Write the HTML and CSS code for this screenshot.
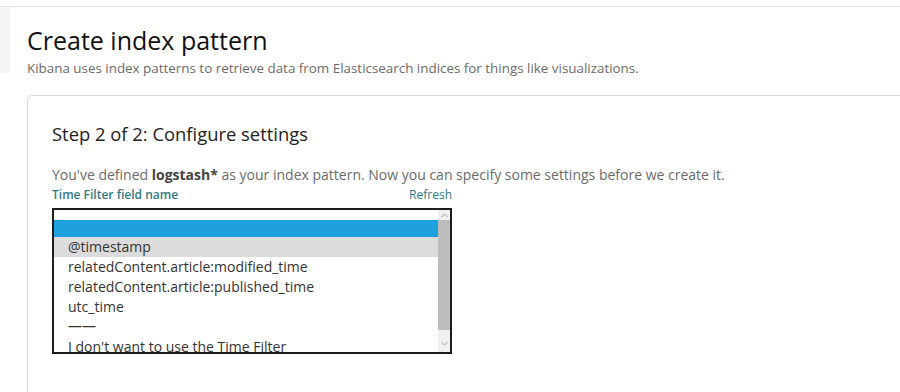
FILE: index.html
```html
<!DOCTYPE html>
<html lang="en">
<head>
    <meta charset="UTF-8">
    <title>Create index pattern</title>
    <link rel="stylesheet" href="styles.css">
</head>
<body>
    <div class="topbar"></div>
    <div class="header">
        <div class="strip"></div>
        <div class="header-text">
            <h1>Create index pattern</h1>
            <p class="subtitle">Kibana uses index patterns to retrieve data from Elasticsearch indices for things like visualizations.</p>
        </div>
    </div>

    <div class="card">
        <h2>Step 2 of 2: Configure settings</h2>
        <p class="intro">You've defined <b>logstash*</b> as your index pattern. Now you can specify some settings before we create it.</p>
        <div class="field">
            <div class="label-row">
                <span class="label">Time Filter field name</span>
                <span class="refresh">Refresh</span>
            </div>
            <div class="listbox">
                <div class="options">
                    <div class="option selected"></div>
                    <div class="option hover">@timestamp</div>
                    <div class="option">relatedContent.article:modified_time</div>
                    <div class="option">relatedContent.article:published_time</div>
                    <div class="option">utc_time</div>
                    <div class="option sep">——</div>
                    <div class="option">I don't want to use the Time Filter</div>
                </div>
                <div class="scrollbar">
                    <div class="arrow">
                        <svg width="7" height="5" viewBox="0 0 7 5"><path d="M0.5 4 L3.5 1 L6.5 4" fill="none" stroke="#a0a0a0" stroke-width="1"/></svg>
                    </div>
                    <div class="thumb"></div>
                    <div class="arrow">
                        <svg width="7" height="5" viewBox="0 0 7 5"><path d="M0.5 1 L3.5 4 L6.5 1" fill="none" stroke="#a0a0a0" stroke-width="1"/></svg>
                    </div>
                </div>
            </div>
        </div>
    </div>
</body>
</html>
```

FILE: styles.css
```css
body {
    margin: 0;
    background-color: #fff;
    font-family: "Open Sans", "Noto Sans", sans-serif;
    overflow: hidden;
}

.topbar {
    height: 6px;
    border-bottom: 1px solid #e4e4e4;
}

.header {
    display: flex;
}

.strip {
    width: 10px;
    height: 66px;
    background-color: #f4f4f4;
}

.header-text {
    padding-left: 17px;
}

h1 {
    margin: 18px 0 0;
    font-size: 25px;
    line-height: 30px;
    font-weight: 400;
    color: #111;
}

.subtitle {
    margin: 3px 0 0;
    font-size: 13.4px;
    line-height: 20px;
    color: #6b6b6b;
}

.card {
    margin: 17px 0 0 27px;
    width: 900px;
    height: 400px;
    border: 1px solid #dcdcdc;
    border-radius: 5px;
    padding: 24px 24px;
}

h2 {
    margin: 1px 0 0;
    font-size: 18.4px;
    line-height: 26px;
    font-weight: 400;
    color: #222;
}

.intro {
    margin: 19px 0 0;
    font-size: 14px;
    line-height: 18px;
    color: #6b6b6b;
}

.intro b {
    color: #444;
}

.field {
    width: 400px;
}

.label-row {
    margin-top: 3px;
    display: flex;
    justify-content: space-between;
    font-size: 12px;
    line-height: 16px;
    color: #307986;
}

.label {
    font-weight: 600;
}

.listbox {
    margin-top: 5px;
    height: 142px;
    border: 2px solid #1d1d1d;
    display: flex;
    overflow: hidden;
}

.options {
    flex: 1;
    padding-top: 10px;
}

.option {
    height: 20px;
    line-height: 20px;
    padding-left: 14px;
    font-size: 14px;
    color: #333;
    white-space: nowrap;
}

.option.selected {
    height: 17px;
    background-color: #20a0dc;
}

.option.hover {
    background-color: #dcdcdc;
}

.option.sep {
    line-height: 18px;
}

.scrollbar {
    width: 12px;
    background-color: #f0f0f0;
    display: flex;
    flex-direction: column;
}

.arrow {
    height: 10px;
    display: flex;
    align-items: center;
    justify-content: center;
}

.thumb {
    height: 110px;
    background-color: #bdbdbd;
    margin: 0 0 8px;
}
```
